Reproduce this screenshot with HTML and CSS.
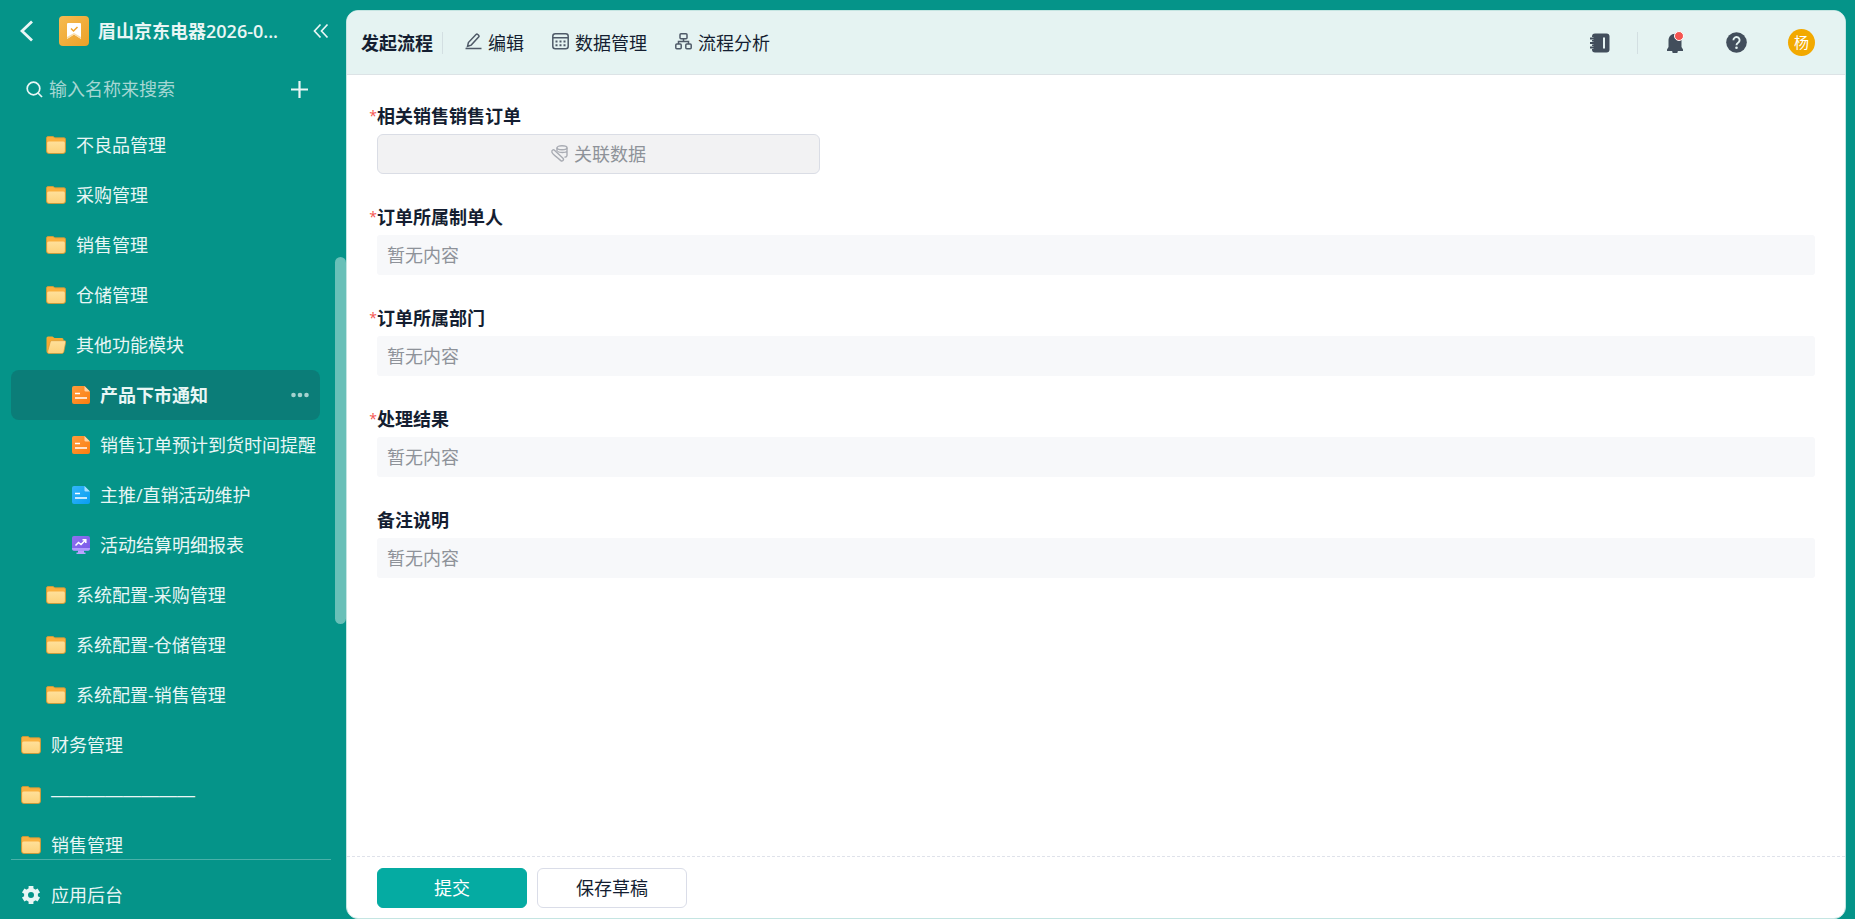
FILE: index.html
```html
<!DOCTYPE html>
<html lang="zh-CN">
<head>
<meta charset="utf-8">
<title>产品下市通知</title>
<link rel="stylesheet" href="styles.css">
</head>
<body>
<svg class="defs" aria-hidden="true">
  <defs>
    <linearGradient id="g-folder" x1="0" y1="0" x2="0" y2="1"><stop offset="0" stop-color="#ffe09a"/><stop offset="1" stop-color="#fdd27a"/></linearGradient>
    <linearGradient id="g-orange" x1="0" y1="0" x2="1" y2="1"><stop offset="0" stop-color="#ff9c3c"/><stop offset="1" stop-color="#fa7d10"/></linearGradient>
    <linearGradient id="g-blue" x1="0" y1="0" x2="1" y2="1"><stop offset="0" stop-color="#33b6fa"/><stop offset="1" stop-color="#0a9df0"/></linearGradient>
    <linearGradient id="g-purple" x1="0" y1="0" x2="1" y2="1"><stop offset="0" stop-color="#8f72f0"/><stop offset="1" stop-color="#7a58e8"/></linearGradient>
    <symbol id="i-folder" viewBox="0 0 20 18">
      <path d="M.5 2A1.500 1.500 0 0 1 2 .5h5l2 1.300h9A1.500 1.500 0 0 1 19.500 3.300V15a2.500 2.500 0 0 1-2.500 2.500H3A2.500 2.500 0 0 1 .5 15z" fill="#f9b040" stroke="#cf9a3a" stroke-width=".9"/>
      <path d="M1.200 7A1.500 1.500 0 0 1 2.700 5.500h14.600A1.500 1.500 0 0 1 18.800 7v8a2 2 0 0 1-2 2H3.200a2 2 0 0 1-2-2z" fill="url(#g-folder)"/>
    </symbol>
    <symbol id="i-open" viewBox="0 0 20 18">
      <path d="M.5 2A1.500 1.500 0 0 1 2 .5h4.500l2 1.500H16A1.500 1.500 0 0 1 17.500 3.500v12L3 17.500A2.500 2.500 0 0 1 .5 15z" fill="#f5a932"/>
      <path d="M4.300 5.800A1.500 1.500 0 0 1 5.700 4.700h12.800a1.200 1.200 0 0 1 1.200 1.500l-1.900 9.800a2 2 0 0 1-1.900 1.500H3a1.500 1.500 0 0 1-1.400-2z" fill="url(#g-folder)" stroke="#d99a35" stroke-width=".7"/>
    </symbol>
    <symbol id="i-chart" viewBox="0 0 18 18">
      <path d="M6 14h6v2.500h1.500V18h-9v-1.500H6z" fill="#b9a4ff"/>
      <rect width="18" height="14.500" rx="2" fill="url(#g-purple)"/>
      <path d="M0 12h18v.8a2 2 0 0 1-2 2H2a2 2 0 0 1-2-2z" fill="#b09aff"/>
      <path d="M3.500 9.500l3-3 2.500 2 4.500-4.500M10.500 3.700h3.300V7" fill="none" stroke="#fff" stroke-width="1.500"/>
    </symbol>
  </defs>
</svg>
<div class="app">
  <aside class="sidebar">
    <header class="brand">
      <button class="icon-btn" aria-label="返回"><svg width="14" height="22" viewBox="0 0 14 22"><path d="M12 1.500L2 11l10 9.500" class="line bold-line"/></svg></button>
      <span class="logo"><svg width="30" height="30" viewBox="0 0 30 30"><path d="M9 7h12a1 1 0 0 1 1 1v15l-7-4.500L8 23V8a1 1 0 0 1 1-1z" fill="#fff"/><path d="M8 23v-2l7-4 7 4v2l-7-4.500z" fill="#f9dda9"/><path d="M12 12.500l2.500 2.500 4-4" fill="none" stroke="#efa52c" stroke-width="1.500"/></svg></span>
      <h1 class="brand-name">眉山京东电器2026-0...</h1>
      <button class="icon-btn" aria-label="收起"><svg width="16" height="16" viewBox="0 0 16 16"><path d="M7.500 1.500L1.500 8l6 6.500M14.500 1.500L8.500 8l6 6.500" class="line"/></svg></button>
    </header>
    <div class="search">
      <svg width="17" height="17" viewBox="0 0 17 17"><circle cx="7.500" cy="7.500" r="6.300" class="line"/><path d="M12 12l4 4" class="line"/></svg>
      <input class="search-input" type="text" placeholder="输入名称来搜索" aria-label="输入名称来搜索">
      <button class="icon-btn" aria-label="新建"><svg width="17" height="17" viewBox="0 0 17 17"><path d="M8.500 0v17M0 8.500h17" class="line plus-line"/></svg></button>
    </div>
    <nav class="tree">
      <a href="#" class="node level-2"><svg class="folder"><use href="#i-folder"/></svg>不良品管理</a>
      <a href="#" class="node level-2"><svg class="folder"><use href="#i-folder"/></svg>采购管理</a>
      <a href="#" class="node level-2"><svg class="folder"><use href="#i-folder"/></svg>销售管理</a>
      <a href="#" class="node level-2"><svg class="folder"><use href="#i-folder"/></svg>仓储管理</a>
      <a href="#" class="node level-2"><svg class="folder"><use href="#i-open"/></svg>其他功能模块</a>
      <div class="node-row active">
        <a href="#" class="node level-3"><svg class="doc" viewBox="0 0 18 18"><path d="M2 0h10.500L18 5.500V16a2 2 0 0 1-2 2H2a2 2 0 0 1-2-2V2a2 2 0 0 1 2-2z" fill="url(#g-orange)"/><path d="M12.500 0L18 5.500h-4.300a1.200 1.200 0 0 1-1.200-1.200z" fill="#ffd3a5"/><path d="M3 7.500h5M3 12h12" stroke="#fff" stroke-width="1.500"/></svg>产品下市通知</a>
        <button class="icon-btn more" aria-label="更多"><svg width="18" height="6" viewBox="0 0 18 6"><circle cx="2.500" cy="3" r="2.300"/><circle cx="9" cy="3" r="2.300"/><circle cx="15.500" cy="3" r="2.300"/></svg></button>
      </div>
      <a href="#" class="node level-3"><svg class="doc" viewBox="0 0 18 18"><path d="M2 0h10.500L18 5.500V16a2 2 0 0 1-2 2H2a2 2 0 0 1-2-2V2a2 2 0 0 1 2-2z" fill="url(#g-orange)"/><path d="M12.500 0L18 5.500h-4.300a1.200 1.200 0 0 1-1.200-1.200z" fill="#ffd3a5"/><path d="M3 7.500h5M3 12h12" stroke="#fff" stroke-width="1.500"/></svg>销售订单预计到货时间提醒</a>
      <a href="#" class="node level-3"><svg class="doc" viewBox="0 0 18 18"><path d="M2 0h10.500L18 5.500V16a2 2 0 0 1-2 2H2a2 2 0 0 1-2-2V2a2 2 0 0 1 2-2z" fill="url(#g-blue)"/><path d="M12.500 0L18 5.500h-4.300a1.200 1.200 0 0 1-1.200-1.200z" fill="#a8e0ff"/><path d="M3 7.500h5M3 12h12" stroke="#fff" stroke-width="1.500"/></svg>主推/直销活动维护</a>
      <a href="#" class="node level-3"><svg class="doc"><use href="#i-chart"/></svg>活动结算明细报表</a>
      <a href="#" class="node level-2"><svg class="folder"><use href="#i-folder"/></svg>系统配置-采购管理</a>
      <a href="#" class="node level-2"><svg class="folder"><use href="#i-folder"/></svg>系统配置-仓储管理</a>
      <a href="#" class="node level-2"><svg class="folder"><use href="#i-folder"/></svg>系统配置-销售管理</a>
      <a href="#" class="node level-1"><svg class="folder"><use href="#i-folder"/></svg>财务管理</a>
      <a href="#" class="node level-1 dashes"><svg class="folder"><use href="#i-folder"/></svg>————————</a>
      <a href="#" class="node level-1"><svg class="folder"><use href="#i-folder"/></svg>销售管理</a>
    </nav>
    <span class="scroll-thumb"></span>
    <footer class="side-footer">
      <a href="#" class="node level-1"><svg class="gear" viewBox="0 0 20 20"><circle cx="10" cy="10" r="5" fill="none" stroke="#e9f6f5" stroke-width="4"/><path d="M10 1v3.500M10 15.500V19M2.200 5.500l3 1.800M14.800 12.700l3 1.800M2.200 14.500l3-1.800M14.800 7.300l3-1.800" stroke="#e9f6f5" stroke-width="4.800"/></svg>应用后台</a>
    </footer>
  </aside>
  <main class="panel">
    <header class="topbar">
      <nav class="tabs">
        <a href="#" class="tab current">发起流程</a>
        <span class="rule"></span>
        <a href="#" class="tab"><svg class="tab-icon" viewBox="0 0 17 19"><path d="M2.500 13.300l.9-3.800L11 1.500q.9-.8 1.800 0l.8.800q.8.900 0 1.800l-7.400 8zM.5 15.500h16"/></svg>编辑</a>
        <a href="#" class="tab"><svg class="tab-icon" viewBox="0 0 17 19"><rect x=".8" y=".8" width="15.400" height="15" rx="2.500"/><path d="M1 4.800h15"/><path d="M3.500 8.500h2M7.500 8.500h2M11.500 8.500h2M3.500 12.200h2M7.500 12.200h2M11.500 12.200h2" stroke-width="2"/></svg>数据管理</a>
        <a href="#" class="tab"><svg class="tab-icon" viewBox="0 0 17 19"><rect x="5" y=".8" width="7" height="5" rx="1"/><rect x=".8" y="11" width="5.400" height="4.800" rx="1"/><rect x="10.800" y="11" width="5.400" height="4.800" rx="1"/><path d="M8.500 6v2.500M3.500 11V8.500h10V11"/></svg>流程分析</a>
      </nav>
      <div class="tools">
        <button class="icon-btn" aria-label="通讯录"><svg width="20" height="20" viewBox="0 0 20 20"><rect x="2" y=".5" width="17.500" height="19" rx="3" fill="#424e5c"/><path d="M0 5.500h3.500M0 10h3.500M0 14.500h3.500" stroke="#e5f3f2" stroke-width="3"/><path d="M0 5.500h4M0 10h4M0 14.500h4" stroke="#424e5c" stroke-width="1.800"/><path d="M14 4.500v11" stroke="#e5f3f2" stroke-width="2"/></svg></button>
        <span class="rule"></span>
        <button class="icon-btn bell" aria-label="消息"><svg width="16" height="20" viewBox="0 0 16 20"><path d="M8 .8c-4 0-6.500 3-6.500 7V14L0 16.500V18h5.200a2.800 2.800 0 0 0 5.600 0H16v-1.500L14.500 14V7.800c0-4-2.500-7-6.500-7z" fill="#424e5c"/></svg><span class="dot"></span></button>
        <button class="icon-btn" aria-label="帮助"><svg width="21" height="21" viewBox="0 0 21 21"><circle cx="10.500" cy="10.500" r="10.300" fill="#424e5c"/><path d="M7.400 8.200a3.100 3.100 0 1 1 4.700 2.600c-1.100.7-1.600 1.200-1.600 2.400" fill="none" stroke="#e5f3f2" stroke-width="1.900"/><circle cx="10.500" cy="15.700" r="1.300" fill="#e5f3f2"/></svg></button>
        <button class="avatar">杨</button>
      </div>
    </header>
    <form class="form" id="order-form">
      <div class="field">
        <label class="label required" for="f-order">相关销售销售订单</label>
        <button type="button" class="link-data" id="f-order" disabled><svg width="17" height="19" viewBox="0 0 17 19"><ellipse cx="11" cy="2.800" rx="5" ry="2"/><path d="M6 2.800v3.400M16 2.800v7.600c0 1-1 1.600-2.500 1.900M6.500 6.500c2.500 1.300 7.500 1.300 9.500 0"/><path d="M3.200 5l8.800 8.300c1.300 1.500-.7 3.600-2.200 2.300L5 11.500M.8 6.300c.5-1.500 1.700-2 2.700-1M.8 6.300C.5 8 4 11 6 12.500"/></svg>关联数据</button>
      </div>
      <div class="field">
        <label class="label required" for="f-owner">订单所属制单人</label>
        <input class="value" id="f-owner" type="text" placeholder="暂无内容" readonly>
      </div>
      <div class="field">
        <label class="label required" for="f-dept">订单所属部门</label>
        <input class="value" id="f-dept" type="text" placeholder="暂无内容" readonly>
      </div>
      <div class="field">
        <label class="label required" for="f-result">处理结果</label>
        <input class="value" id="f-result" type="text" placeholder="暂无内容" readonly>
      </div>
      <div class="field">
        <label class="label" for="f-note">备注说明</label>
        <input class="value" id="f-note" type="text" placeholder="暂无内容" readonly>
      </div>
    </form>
    <footer class="actions">
      <button class="btn primary" type="submit" form="order-form">提交</button>
      <button class="btn" type="button">保存草稿</button>
    </footer>
  </main>
</div>
</body>
</html>
```
FILE: styles.css
```css
* { box-sizing: border-box; }

body {
  margin: 0;
  background: #059489;
  color: #141e31;
  font-family: "Open Sans", "Noto Sans CJK SC", sans-serif;
  font-size: 18px;
  line-height: 26px;
}

button, input { font: inherit; color: inherit; }
a { color: inherit; text-decoration: none; }
svg { flex: none; display: block; }
.defs { position: absolute; width: 0; height: 0; }

.icon-btn {
  display: flex;
  padding: 0;
  border: 0;
  background: none;
}

.line { fill: none; stroke: #e9f6f5; stroke-width: 1.7; }
.bold-line { stroke-width: 2.8; }
.plus-line { stroke-width: 2.2; }

.app {
  display: grid;
  grid-template-columns: 346px 1fr;
  height: 100vh;
  padding-right: 9px;
}

/* Sidebar */
.sidebar {
  position: relative;
  display: flex;
  flex-direction: column;
  min-height: 0;
  color: #e9f6f5;
}

.brand {
  display: flex;
  align-items: center;
  height: 62px;
  padding: 0 17px 0 20px;
}
.logo {
  margin: 0 9px 0 25px;
  border-radius: 4px;
  background: linear-gradient(135deg, #f6bb52, #eca127);
}
.brand-name {
  flex: 1;
  margin: 0;
  font-size: 18px;
  font-weight: 600;
  line-height: 26px;
  white-space: nowrap;
  overflow: hidden;
}

.search {
  display: flex;
  align-items: center;
  height: 58px;
  padding: 0 38px 4px 26px;
}
.search-input {
  flex: 1;
  min-width: 0;
  padding: 0 6px;
  border: 0;
  outline: 0;
  background: none;
}
.search-input::placeholder { color: #a5d7d3; opacity: 1; }

.tree {
  flex: 1;
  min-height: 0;
  overflow: hidden;
}
.node {
  display: flex;
  align-items: center;
  gap: 10px;
  height: 50px;
  white-space: nowrap;
}
.level-1 { padding-left: 21px; }
.level-2 { padding-left: 46px; }
.level-3 { padding-left: 72px; }
.dashes { font-family: "Liberation Sans", sans-serif; }
.folder { width: 20px; height: 18px; }
.doc { width: 18px; height: 18px; }
.gear { width: 20px; height: 20px; }

.node-row {
  display: flex;
  align-items: center;
  justify-content: space-between;
  margin: 0 26px 0 11px;
  padding-right: 11px;
  border-radius: 8px;
}
.node-row .node { padding-left: 61px; }
.active { background: #0b7d78; font-weight: 700; }
.more { fill: #a5d2cf; }

.scroll-thumb {
  position: absolute;
  top: 257px;
  right: 0;
  width: 11px;
  height: 367px;
  border-radius: 6px;
  background: #69c0b8;
}

.side-footer {
  margin: 0 15px 0 11px;
  padding: 10px 0 0;
  height: 60px;
  border-top: 1px solid #4ab1a9;
}
.side-footer .node { padding-left: 10px; }

/* Main panel */
.panel {
  display: flex;
  flex-direction: column;
  min-width: 0;
  margin-top: 10px;
  border: 1px solid #c4e5e2;
  border-radius: 12px;
  background: #fff;
  overflow: hidden;
}

.topbar {
  display: flex;
  justify-content: space-between;
  align-items: center;
  height: 64px;
  padding: 0 30px 0 14px;
  border-bottom: 1px solid #dce3e6;
  background: #e5f3f2;
}
.tabs, .tools { display: flex; align-items: center; }
.tab {
  display: flex;
  align-items: center;
  gap: 6px;
  margin-right: 28px;
}
.tab.current { margin-right: 9px; font-weight: 700; }
.tabs .rule { margin-right: 22px; }
.tab-icon {
  width: 17px;
  height: 19px;
  fill: none;
  stroke: #4f5a68;
  stroke-width: 1.500;
}
.rule { width: 1px; height: 22px; background: #d3dfe2; }
.tools .rule { margin: 0 29px 0 27px; }
.bell { position: relative; margin-right: 43px; }
.dot {
  position: absolute;
  top: -2px;
  right: -1px;
  width: 10px;
  height: 10px;
  border: 1px solid #fff;
  border-radius: 50%;
  background: #f55450;
}
.avatar {
  width: 27px;
  height: 27px;
  margin-left: 41px;
  padding: 0;
  border: 0;
  border-radius: 50%;
  background: #f2a900;
  color: #fff;
  font-size: 15px;
  line-height: 27px;
}

.form {
  flex: 1;
  display: flex;
  flex-direction: column;
  gap: 30px;
  min-height: 0;
  padding: 28px 30px;
  overflow: hidden;
}
.field {
  display: flex;
  flex-direction: column;
  align-items: flex-start;
  gap: 5px;
}
.label { position: relative; font-weight: 700; }
.required::before {
  content: "*";
  position: absolute;
  right: 100%;
  color: #f55450;
  font-size: 14px;
  font-weight: 400;
}
.link-data {
  display: flex;
  align-items: center;
  justify-content: center;
  gap: 6px;
  width: 443px;
  height: 40px;
  border: 1px solid #dadde5;
  border-radius: 6px;
  background: #f2f2f3;
  color: #8e9299;
}
.link-data svg { fill: none; stroke: #a9acb3; stroke-width: 1.400; }
.value {
  width: 100%;
  height: 40px;
  padding: 0 10px;
  border: 0;
  border-radius: 3px;
  outline: 0;
  background: #f7f8fa;
}
.value::placeholder { color: #8e9299; opacity: 1; }

.actions {
  display: flex;
  gap: 10px;
  padding: 11px 30px 10px;
  border-top: 1px dashed #dfe2ea;
}
.btn {
  width: 150px;
  height: 40px;
  border: 1px solid #dadde8;
  border-radius: 6px;
  background: #fff;
}
.primary { border-color: #05aba2; background: #05aba2; color: #fff; }
```
